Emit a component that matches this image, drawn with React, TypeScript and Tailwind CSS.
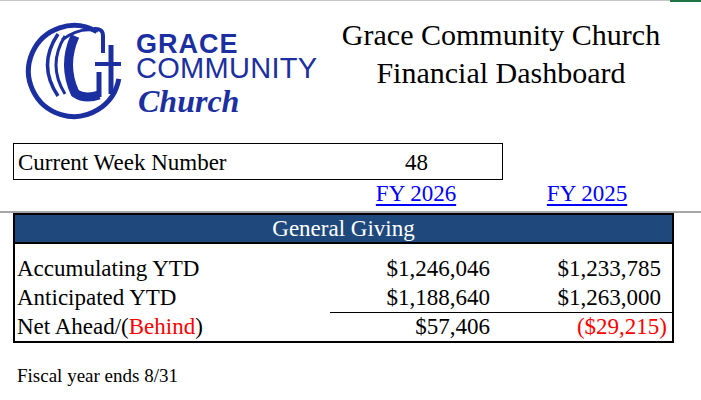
import React from "react";

const LOGO = "#1c2fa0";

function Logo() {
  return (
    <div className="flex w-[330px] pl-[20px] pt-[16px]">
      <svg width="112" height="106" viewBox="20 18 112 106" fill="none" stroke={LOGO}>
        <path d="M118.8 78.9 A45.5 45.5 0 1 1 96.7 31.6" strokeWidth="5" />
        <path d="M94 29 Q103 28 103 36 L103 53" strokeWidth="4" />
        <path d="M62 40 Q80 26 98 31" strokeWidth="3" />
        <path d="M58 34 Q37 65 58 96" strokeWidth="3.5" />
        <path d="M65 36 Q47 65 65 94" strokeWidth="3" />
        <path d="M75 36 Q62 65 75 93 Q85 100 99 95" strokeWidth="9" />
        <path d="M99 72 L99 97" strokeWidth="5" />
        <path d="M111 45 L111 94" strokeWidth="5" />
        <path d="M95 64 L121 64" strokeWidth="4" />
      </svg>
      <div className="ml-[4px] flex flex-col font-['Liberation_Sans',sans-serif] text-[#1c2fa0]">
        <div className="mt-[14px] text-[27px] leading-[25px] font-bold tracking-[1px]">GRACE</div>
        <div className="mt-[1px] text-[29px] leading-[21px] tracking-[0.3px]">COMMUNITY</div>
        <div className="mt-[6px] ml-[2px] font-['Liberation_Serif',serif] italic font-bold text-[32px] leading-[33px]">
          Church
        </div>
      </div>
    </div>
  );
}

function Row({
  label,
  b,
  c,
  h,
  line,
  neg,
}: {
  label: React.ReactNode;
  b: string;
  c: string;
  h: string;
  line?: boolean;
  neg?: boolean;
}) {
  const lh = h === "h-[28px]" ? "leading-[28px]" : "leading-[29px]";
  return (
    <div className={`flex ${h} ${lh}`}>
      <div className="w-[315px] pl-[2px]">{label}</div>
      <div className={`w-[172px] text-right pr-[12px] ${line ? "border-b border-black" : ""}`}>{b}</div>
      <div
        className={`w-[170px] text-right ${neg ? "pr-[5px] text-[#ff0000]" : "pr-[11px]"} ${
          line ? "border-b border-black" : ""
        }`}
      >
        {c}
      </div>
    </div>
  );
}

export default function App() {
  return (
    <div className="w-[701px] h-[400px] bg-white overflow-hidden text-black font-['Liberation_Serif',serif]">
      <div className="flex h-[2px] items-start">
        <div className="flex-1 h-px bg-[#c6c6c6]" />
        <div className="w-[31px] h-[2px] bg-[#217346]" />
      </div>
      <div className="flex h-[141px]">
        <Logo />
        <div className="w-[342px] pt-[14px] text-center text-[30px] leading-[38px]">
          <div>Grace Community Church</div>
          <div>Financial Dashboard</div>
        </div>
      </div>
      <div className="pl-[13px]">
        <div className="w-[490px] h-[37px] border border-black flex pt-[2px] text-[23px] leading-[33px]">
          <div className="flex-1 pl-[4px]">Current Week Number</div>
          <div className="w-[171px] text-center">48</div>
        </div>
      </div>
      <div className="flex h-[31px] pl-[330px] text-[23px] leading-[28px]">
        <div className="w-[172px] text-center">
          <span className="text-[#0000ff] underline underline-offset-[3px]">FY 2026</span>
        </div>
        <div className="w-[170px] text-center">
          <span className="text-[#0000ff] underline underline-offset-[3px]">FY 2025</span>
        </div>
      </div>
      <div className="h-[2px] bg-[#a6a6a6]" />
      <div className="ml-[13px] w-[661px] border-2 border-black text-[23px]">
        <div className="h-[29px] bg-[#1f497d] border-b-2 border-black text-white text-center leading-[27px]">
          General Giving
        </div>
        <div className="h-[10px]" />
        <Row label="Accumulating YTD" b="$1,246,046" c="$1,233,785" h="h-[29px]" />
        <Row label="Anticipated YTD" b="$1,188,640" c="$1,263,000" h="h-[30px]" line />
        <Row
          label={
            <>
              Net Ahead/(<span className="text-[#ff0000]">Behind</span>)
            </>
          }
          b="$57,406"
          c="($29,215)"
          h="h-[28px]"
          neg
        />
      </div>
      <div className="mt-[22px] pl-[17px] text-[19px] leading-[21px]">Fiscal year ends 8/31</div>
    </div>
  );
}
